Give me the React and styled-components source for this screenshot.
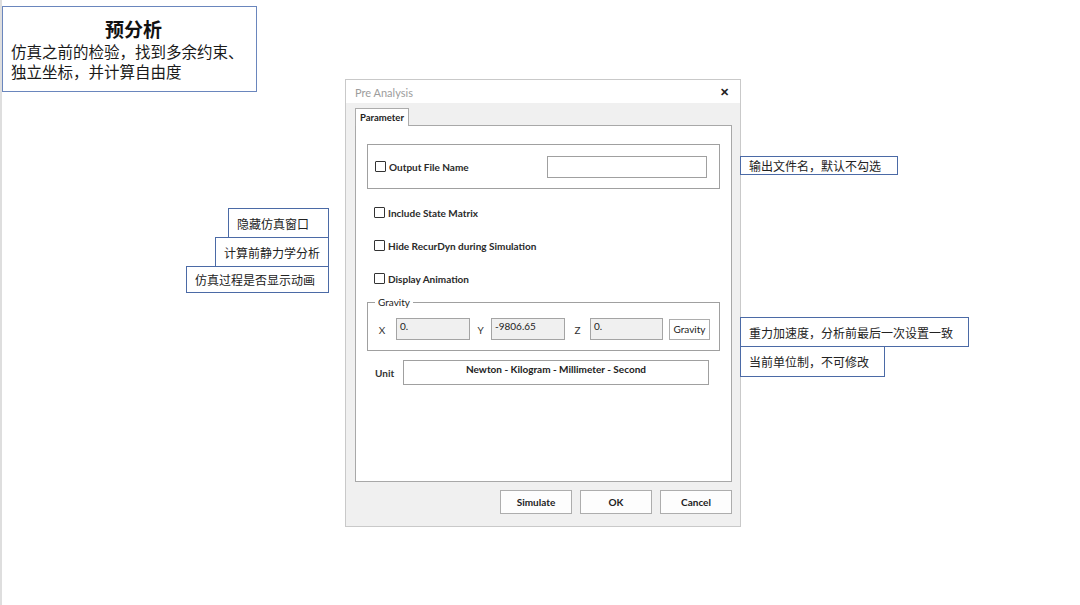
import React from 'react';
import styled, { createGlobalStyle } from "styled-components";

const GlobalStyle = createGlobalStyle`
  html, body {
    margin: 0;
    padding: 0;
    background: #fff;
  }
`

const CN = `"Noto Sans CJK SC", "Noto Sans", sans-serif`
const UI = `Lato, "Noto Sans", sans-serif`

function Check({ children }) {
  return (
    <StCheckRow>
      <StBox />
      <StCheckLabel>{children}</StCheckLabel>
    </StCheckRow>
  )
}

function App() {
  return (
    <>
      <GlobalStyle />
      <StCanvas>
        <StTitleBox>
          <StTitle>预分析</StTitle>
          <StDesc>仿真之前的检验，找到多余约束、<br />独立坐标，并计算自由度</StDesc>
        </StTitleBox>

        <StWindow>
          <StTitleBar>
            <StWinTitle>Pre Analysis</StWinTitle>
            <StClose>✕</StClose>
          </StTitleBar>
          <StWinBody>
            <StTab>Parameter</StTab>
            <StPanel>
              <StGroup>
                <Check>Output File Name</Check>
                <StFileInput />
              </StGroup>

              <StOptions>
                <Check>Include State Matrix</Check>
                <Check>Hide RecurDyn during Simulation</Check>
                <Check>Display Animation</Check>
              </StOptions>

              <StFieldset>
                <StLegend>Gravity</StLegend>
                <StGravityGrid>
                  <StAxis>X</StAxis>
                  <StValue>0.</StValue>
                  <StAxis>Y</StAxis>
                  <StValue>-9806.65</StValue>
                  <StAxis>Z</StAxis>
                  <StValue>0.</StValue>
                  <span />
                  <StSmallButton>Gravity</StSmallButton>
                </StGravityGrid>
              </StFieldset>

              <StUnitRow>
                <StUnitLabel>Unit</StUnitLabel>
                <StUnitField>Newton - Kilogram - Millimeter - Second</StUnitField>
              </StUnitRow>
            </StPanel>
            <StFooter>
              <StButton>Simulate</StButton>
              <StButton>OK</StButton>
              <StButton>Cancel</StButton>
            </StFooter>
          </StWinBody>
        </StWindow>

        <StNote $x={740} $y={156} $w={158} $h={19}>输出文件名，默认不勾选</StNote>
        <StNote $x={228} $y={208} $w={101} $h={30}>隐藏仿真窗口</StNote>
        <StNote $x={215} $y={237} $w={114} $h={30}>计算前静力学分析</StNote>
        <StNote $x={186} $y={266} $w={143} $h={27}>仿真过程是否显示动画</StNote>
        <StNote $x={740} $y={317} $w={229} $h={30}>重力加速度，分析前最后一次设置一致</StNote>
        <StNote $x={740} $y={346} $w={145} $h={31}>当前单位制，不可修改</StNote>
      </StCanvas>
    </>
  );
};

export default App

const StCanvas = styled.div`
  position: relative;
  width: 1080px;
  height: 605px;
  box-sizing: border-box;
  border-left: 2px solid #dedede;
  overflow: hidden;
`

const StTitleBox = styled.div`
  width: 255px;
  height: 86px;
  box-sizing: border-box;
  margin-top: 6px;
  border: 1px solid #6a86bd;
  padding: 10px 0 0 8px;
  font-family: ${CN};
  color: #111;
`
const StTitle = styled.div`
  text-align: center;
  font-size: 19px;
  font-weight: 700;
  line-height: 24px;
`
const StDesc = styled.div`
  font-size: 15.5px;
  line-height: 20px;
  color: #1a1a1a;
`

const StWindow = styled.div`
  position: absolute;
  left: 343px;
  top: 79px;
  width: 396px;
  height: 448px;
  box-sizing: border-box;
  border: 1px solid #c9c9c9;
  background: #f0f0f0;
  display: flex;
  flex-direction: column;
  font-family: ${UI};
`
const StTitleBar = styled.div`
  height: 23px;
  background: #fff;
  display: flex;
  align-items: center;
  justify-content: space-between;
  padding: 0 11px 0 9px;
`
const StWinTitle = styled.span`
  font-size: 11px;
  color: #9c9c9c;
  margin-top: 2px;
`
const StClose = styled.span`
  font-size: 11px;
  font-weight: 700;
  color: #222;
`
const StWinBody = styled.div`
  flex: 1;
  padding: 5px 8px 0 9px;
  display: flex;
  flex-direction: column;
`
const StTab = styled.div`
  align-self: flex-start;
  width: 54px;
  height: 18px;
  box-sizing: border-box;
  background: #fff;
  border: 1px solid #acacac;
  border-bottom: none;
  font-size: 9.5px;
  font-weight: 700;
  color: #222;
  padding: 3px 0 0 4px;
  margin-bottom: -1px;
  position: relative;
  z-index: 1;
`
const StPanel = styled.div`
  height: 357px;
  box-sizing: border-box;
  background: #fff;
  border: 1px solid #a8a8a8;
  padding: 18px 11px 0 11px;
  display: flex;
  flex-direction: column;
`
const StGroup = styled.div`
  height: 45px;
  box-sizing: border-box;
  border: 1px solid #a0a0a0;
  display: flex;
  align-items: center;
  justify-content: space-between;
  padding: 0 12px 0 7px;
`
const StCheckRow = styled.label`
  display: flex;
  align-items: center;
  gap: 3px;
  height: 13px;
`
const StBox = styled.span`
  width: 11px;
  height: 11px;
  box-sizing: border-box;
  border: 1px solid #333;
  border-radius: 1px;
  background: #fff;
`
const StCheckLabel = styled.span`
  font-size: 10px;
  font-weight: 700;
  color: #2a2a2a;
`
const StFileInput = styled.div`
  width: 160px;
  height: 22px;
  box-sizing: border-box;
  border: 1px solid #a0a0a0;
  background: #fff;
`
const StOptions = styled.div`
  display: flex;
  flex-direction: column;
  gap: 20px;
  padding: 17px 0 0 7px;
`
const StFieldset = styled.fieldset`
  margin: 11px 0 0 0;
  padding: 0 0 10px 0;
  border: 1px solid #a0a0a0;
  min-width: 0;
`
const StLegend = styled.legend`
  margin-left: 7px;
  padding: 0 3px;
  font-size: 10px;
  color: #222;
  line-height: 12px;
`
const StGravityGrid = styled.div`
  display: grid;
  grid-template-columns: 28px 74px 21px 74px 25px 73px 6px 41px;
  align-items: center;
  margin-top: 10px;
`
const StAxis = styled.span`
  text-align: center;
  font-size: 10px;
  color: #333;
  padding-top: 1px;
`
const StValue = styled.div`
  height: 22px;
  box-sizing: border-box;
  border: 1px solid #a4a4a4;
  background: #f0f0f0;
  font-size: 10px;
  color: #222;
  padding: 1px 3px;
`
const StSmallButton = styled.div`
  height: 21px;
  box-sizing: border-box;
  border: 1px solid #adadad;
  background: #fff;
  font-size: 10px;
  color: #222;
  display: flex;
  align-items: center;
  justify-content: center;
`
const StUnitRow = styled.div`
  display: flex;
  align-items: center;
  margin-top: 9px;
`
const StUnitLabel = styled.span`
  width: 36px;
  padding-left: 8px;
  box-sizing: border-box;
  font-size: 10px;
  font-weight: 700;
  color: #333;
  padding-top: 1px;
`
const StUnitField = styled.div`
  width: 306px;
  height: 25px;
  box-sizing: border-box;
  border: 1px solid #a0a0a0;
  background: #fff;
  text-align: center;
  font-size: 10px;
  font-weight: 700;
  color: #222;
  padding-top: 2px;
`
const StFooter = styled.div`
  display: flex;
  justify-content: flex-end;
  gap: 8px;
  padding: 8px 0 0 0;
`
const StButton = styled.div`
  width: 72px;
  height: 24px;
  box-sizing: border-box;
  border: 1px solid #adadad;
  background: #fdfdfd;
  font-size: 10px;
  font-weight: 700;
  color: #222;
  display: flex;
  align-items: center;
  justify-content: center;
`

const StNote = styled.div`
  position: absolute;
  left: ${p => p.$x - 2}px;
  top: ${p => p.$y}px;
  width: ${p => p.$w}px;
  height: ${p => p.$h}px;
  box-sizing: border-box;
  border: 1px solid #4b6aa6;
  background: #fff;
  font-family: ${CN};
  font-size: 12px;
  color: #222;
  display: flex;
  align-items: center;
  padding-left: 8px;
  white-space: nowrap;
`
